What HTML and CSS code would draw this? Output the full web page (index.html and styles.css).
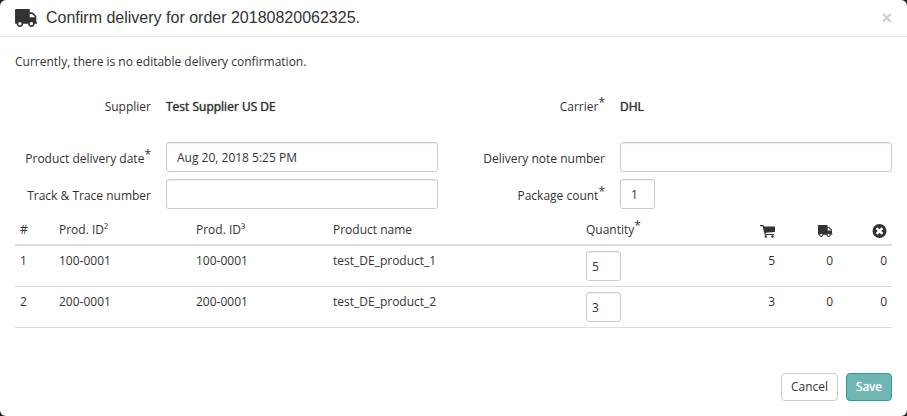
FILE: index.html
```html
<!DOCTYPE html>
<html lang="en">
<head>
  <meta charset="UTF-8" />
  <meta name="viewport" content="width=device-width, initial-scale=1.0" />
  <title>Confirm delivery</title>
  <link rel="stylesheet" href="styles.css">
</head>
<body>
  <svg class="sprite" aria-hidden="true">
    <symbol id="truck" viewBox="0 256 1792 1408">
      <path transform="translate(1792 0) scale(-1 1)" d="M640 1408q0-52-38-90t-90-38-90 38-38 90 38 90 90 38 90-38 38-90zm-384-512h384v-256h-158q-13 0-22 9l-195 195q-9 9-9 22v30zm1280 512q0-52-38-90t-90-38-90 38-38 90 38 90 90 38 90-38 38-90zm256-1088v1024q0 15-4 26.5t-13.5 18.5-16.5 11.5-23.5 6-22.5 2-25.5 0-22.5-.5q0 106-75 181t-181 75-181-75-75-181h-384q0 106-75 181t-181 75-181-75-75-181h-64q-3 0-22.5.5t-25.5 0-22.5-2-23.5-6-16.5-11.5-13.5-18.5-4-26.5q0-26 19-45t45-19v-320q0-8-.5-35t0-38 2.5-34.5 6.5-37 14-30.5 22.5-30l198-198q19-19 50.5-32t58.5-13h160v-192q0-26 19-45t45-19h1024q26 0 45 19t19 45z"/>
    </symbol>
    <symbol id="cart" viewBox="0 0 15 14">
      <path d="M0 1h3.400l.6 1.500H15V8L5.500 8.800l.3 1.200H14v1H4.800L2.600 2.200H0z"/>
      <circle cx="5.800" cy="12.500" r="1.200"/>
      <circle cx="12.500" cy="12.500" r="1.200"/>
    </symbol>
    <symbol id="remove" viewBox="0 0 14 14">
      <path fill-rule="evenodd" d="M7 0a7 7 0 1 1 0 14A7 7 0 0 1 7 0zM5 3.200L3.200 5l2 2-2 2L5 10.800l2-2 2 2L10.800 9l-2-2 2-2L9 3.200l-2 2z"/>
    </symbol>
  </svg>
  <form class="modal">
    <header class="modal-header">
      <svg class="icon-title" aria-hidden="true"><use href="#truck"/></svg>
      <h1>Confirm delivery for order 20180820062325.</h1>
      <button type="button" class="close" aria-label="Close">×</button>
    </header>
    <div class="modal-body">
      <p class="message">Currently, there is no editable delivery confirmation.</p>
      <div class="fields summary">
        <div class="field">
          <span class="label">Supplier</span>
          <strong>Test Supplier US DE</strong>
        </div>
        <div class="field">
          <span class="label">Carrier<sup>*</sup></span>
          <strong>DHL</strong>
        </div>
      </div>
      <div class="fields">
        <div class="field">
          <label class="label" for="date">Product delivery date<sup>*</sup></label>
          <input type="text" id="date" value="Aug 20, 2018 5:25 PM">
        </div>
        <div class="field">
          <label class="label" for="note">Delivery note number</label>
          <input type="text" id="note">
        </div>
        <div class="field">
          <label class="label" for="track">Track &amp; Trace number</label>
          <input type="text" id="track">
        </div>
        <div class="field">
          <label class="label" for="packages">Package count<sup>*</sup></label>
          <input type="text" id="packages" class="short" value="1">
        </div>
      </div>
      <table class="products">
        <colgroup>
          <col class="col-pos"><col class="col-id"><col class="col-id"><col class="col-name">
          <col><col class="col-count"><col class="col-count"><col class="col-last">
        </colgroup>
        <thead>
          <tr>
            <th>#</th>
            <th>Prod. ID²</th>
            <th>Prod. ID³</th>
            <th>Product name</th>
            <th>Quantity<sup>*</sup></th>
            <th class="count"><svg class="icon" role="img" aria-label="Ordered"><use href="#cart"/></svg></th>
            <th class="count"><svg class="icon" role="img" aria-label="Delivered"><use href="#truck"/></svg></th>
            <th class="count"><svg class="icon" role="img" aria-label="Cancelled"><use href="#remove"/></svg></th>
          </tr>
        </thead>
        <tbody>
          <tr>
            <td>1</td>
            <td>100-0001</td>
            <td>100-0001</td>
            <td>test_DE_product_1</td>
            <td><input type="text" class="short quantity" value="5" aria-label="Quantity test_DE_product_1"></td>
            <td class="count">5</td>
            <td class="count">0</td>
            <td class="count">0</td>
          </tr>
          <tr>
            <td>2</td>
            <td>200-0001</td>
            <td>200-0001</td>
            <td>test_DE_product_2</td>
            <td><input type="text" class="short quantity" value="3" aria-label="Quantity test_DE_product_2"></td>
            <td class="count">3</td>
            <td class="count">0</td>
            <td class="count">0</td>
          </tr>
        </tbody>
      </table>
    </div>
    <footer class="modal-footer">
      <button type="button" class="btn">Cancel</button>
      <button type="submit" class="btn btn-primary">Save</button>
    </footer>
  </form>
</body>
</html>
```
FILE: styles.css
```css
* {
  box-sizing: border-box;
}

body {
  margin: 0;
  background-color: #222;
  color: #333;
  font-family: "Open Sans", sans-serif;
  font-size: 12px;
  line-height: 20px;
}

.sprite {
  display: none;
}

.modal {
  display: flex;
  flex-direction: column;
  min-height: 100vh;
  background-color: #fff;
  border-radius: 6px;
}

.modal-header {
  display: flex;
  align-items: center;
  gap: 8px;
  padding: 8px 15px;
  border-bottom: 1px solid #e5e5e5;
}

h1 {
  flex: 1;
  margin: 0;
  font-family: "Liberation Sans", Arial, sans-serif;
  font-size: 16px;
  font-weight: normal;
  line-height: 20px;
}

.icon-title {
  width: 23px;
  height: 18px;
  fill: #333;
}

.close {
  padding: 0;
  border: 0;
  background: none;
  color: #ccc;
  font-family: "Liberation Sans", Arial, sans-serif;
  font-size: 18px;
  font-weight: bold;
  line-height: 20px;
}

.modal-body {
  flex: 1;
  padding: 15px;
}

.message {
  margin: 0 0 25px;
}

.fields {
  display: grid;
  grid-template-columns: 1fr 1fr;
  gap: 7px 31px;
}

.summary {
  margin-bottom: 25px;
}

.field {
  display: grid;
  grid-template-columns: 1fr 2fr;
  align-items: center;
  column-gap: 15px;
}

.label {
  text-align: right;
}

label.label {
  padding-top: 3px;
}

sup {
  position: relative;
  top: -4px;
  font-size: 12px;
  line-height: 0;
  vertical-align: baseline;
}

strong {
  font-weight: normal;
  text-shadow: 0 0 1px #333;
}

input {
  width: 100%;
  height: 30px;
  padding: 5px 10px;
  border: 1px solid #ccc;
  border-radius: 3px;
  box-shadow: inset 0 1px 1px rgba(0, 0, 0, 0.08);
  color: #333;
  font: inherit;
}

.short {
  width: 35px;
}

.quantity {
  display: block;
  padding: 5px;
}

.products {
  width: 100%;
  margin-top: 6px;
  border-collapse: collapse;
  table-layout: fixed;
}

th,
td {
  padding: 5px;
  border-bottom: 1px solid #ddd;
  font-weight: normal;
  text-align: left;
  vertical-align: top;
}

th {
  padding-bottom: 4px;
  border-bottom-width: 2px;
}

.col-pos {
  width: 39px;
}

.col-id {
  width: 137px;
}

.col-name {
  width: 253px;
}

.col-count {
  width: 58px;
}

.col-last {
  width: 54px;
}

.count {
  text-align: right;
}

.icon {
  width: 15px;
  height: 14px;
  fill: #333;
  vertical-align: middle;
}

.modal-footer {
  display: flex;
  justify-content: flex-end;
  gap: 8px;
  padding: 15px;
}

.btn {
  height: 28px;
  padding: 0 9px;
  border: 1px solid #ccc;
  border-radius: 4px;
  background-color: #fff;
  color: #333;
  font: inherit;
}

.btn-primary {
  border-color: #2a9d97;
  background-color: #6fb5b3;
  color: #fff;
  text-shadow: 0 0 1px #fff;
}
```
